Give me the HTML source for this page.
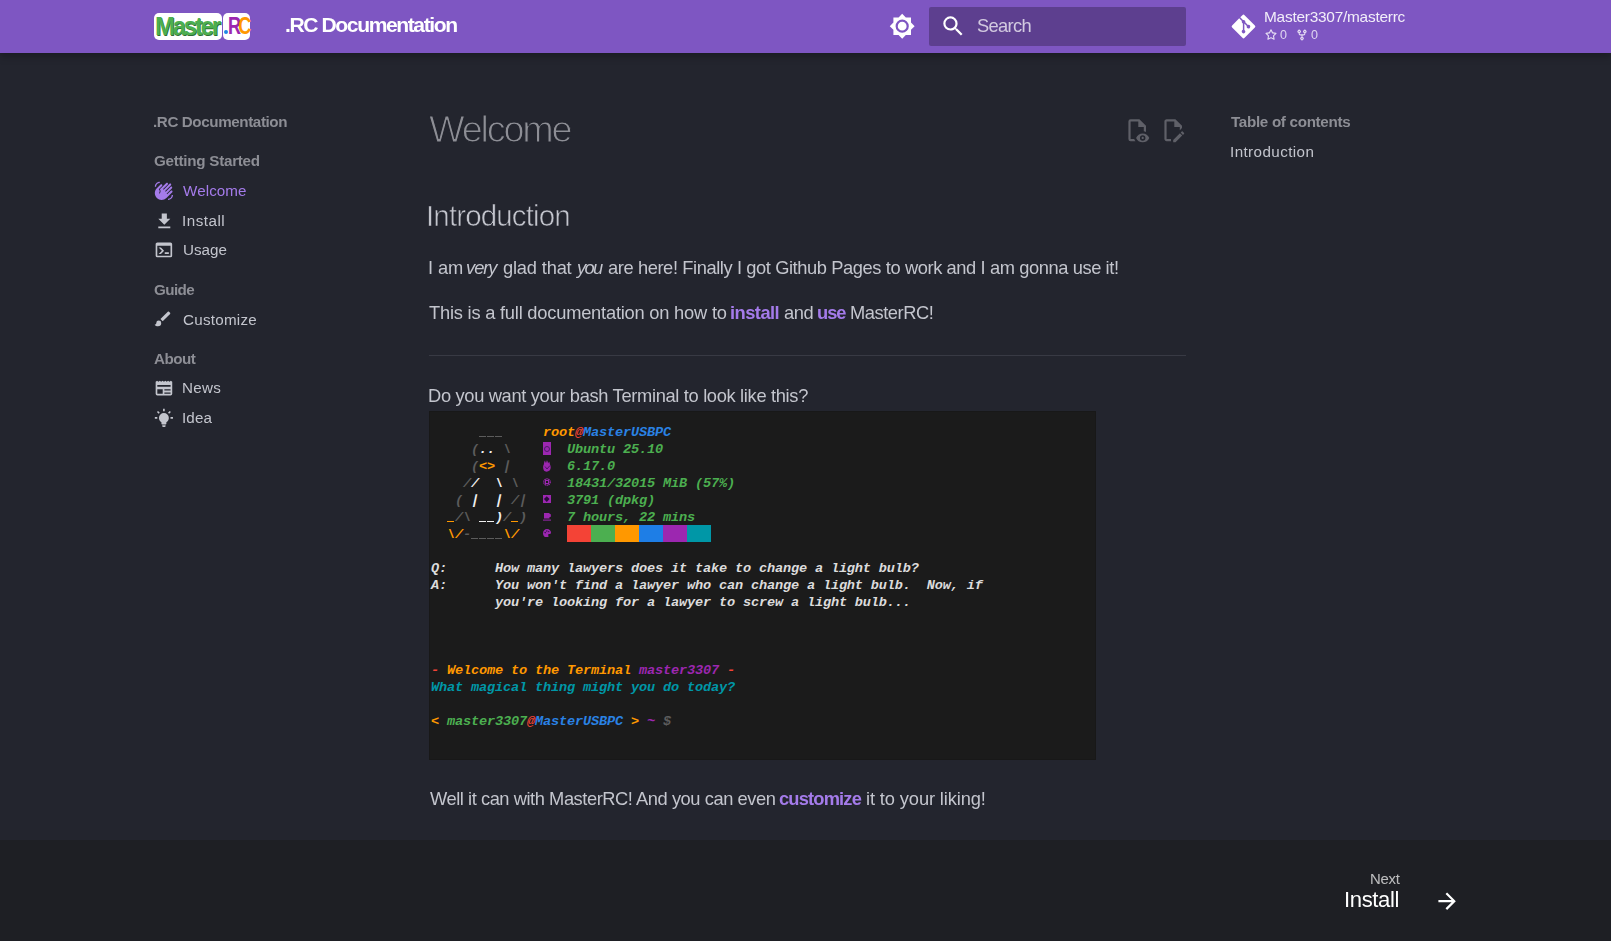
<!DOCTYPE html>
<html><head><meta charset="utf-8"><title>.RC Documentation</title>
<style>
html,body{margin:0;padding:0;width:1611px;height:941px;overflow:hidden;background:#23252e;font-family:"Liberation Sans",sans-serif;}
.t{position:absolute;white-space:nowrap;line-height:0;will-change:transform}
.t i{font-style:italic}
.lk{color:#a47bea;font-weight:700}
.ab{position:absolute}
svg.ic{position:absolute;display:block}
#term{position:absolute;left:429px;top:411px;width:667px;height:349px;background:#1b1b1b;box-shadow:inset 0 0 0 1px #181818;overflow:hidden}
#term .l{position:absolute;left:2px;white-space:pre;font-family:"Liberation Mono",monospace;font-size:13.6px;letter-spacing:-0.16px;line-height:0;font-style:italic;font-weight:700;color:#e8e8e8}
</style></head><body>
<style>#h1{-webkit-text-stroke:1.1px #23252e} #h2{-webkit-text-stroke:0.6px #23252e}</style>
<div class="ab" style="left:0;top:0;width:1611px;height:53px;background:#7e56c2;box-shadow:0 0 4px rgba(0,0,0,.1),0 4px 8px rgba(0,0,0,.2)"></div>
<!-- logo -->
<div class="ab" style="left:154px;top:13px;width:68px;height:27px;background:#fff;border-radius:5px"></div>
<div class="ab" style="left:223px;top:13px;width:27px;height:27px;background:#fff;border-radius:5px"></div>
<div class="ab" style="left:154.8px;top:25.6px;font:bold 26.6px 'Liberation Sans';line-height:0;color:#4caf50;letter-spacing:-2.45px;transform:scaleX(0.9);transform-origin:0 0;text-shadow:0.7px 0.9px 0 #2f6e33;white-space:nowrap">Master</div>
<div class="ab" style="left:224.1px;top:30px;width:4.2px;height:4.3px;border-radius:50%;background:#1e88e5"></div>
<div class="ab" style="left:227.8px;top:26.4px;font:bold 23.2px 'Liberation Sans';line-height:0;letter-spacing:-3.6px;transform:scaleX(0.78);transform-origin:0 0;white-space:nowrap"><span style="color:#9c27b0">R</span><span style="color:#ff9800">C</span></div>
<!-- palette toggle -->
<svg class="ic" style="left:889px;top:13px" width="26.4" height="26.4" viewBox="0 0 24 24"><path fill="#fff" d="M12,8A4,4 0 0,0 8,12A4,4 0 0,0 12,16A4,4 0 0,0 16,12A4,4 0 0,0 12,8M12,18A6,6 0 0,1 6,12A6,6 0 0,1 12,6A6,6 0 0,1 18,12A6,6 0 0,1 12,18M20,8.69V4H15.31L12,0.69L8.69,4H4V8.69L0.69,12L4,15.31V20H8.69L12,23.31L15.31,20H20V15.31L23.31,12L20,8.69Z"/></svg>
<!-- search -->
<div class="ab" style="left:929px;top:7px;width:257px;height:39px;background:rgba(0,0,0,0.26);border-radius:2px"></div>
<svg class="ic" style="left:940px;top:13px" width="26.4" height="26.4" viewBox="0 0 24 24"><path fill="#fff" d="M9.5,3A6.5,6.5 0 0,1 16,9.5C16,11.11 15.41,12.59 14.44,13.73L14.71,14H15.5L20.5,19L19,20.5L14,15.5V14.71L13.73,14.44C12.590,15.41 11.11,16 9.5,16A6.5,6.5 0 0,1 3,9.5A6.5,6.5 0 0,1 9.5,3M9.5,5C7,5 5,7 5,9.5C5,12 7,14 9.5,14C12,14 14,12 14,9.5C14,7 12,5 9.5,5Z"/></svg>
<!-- git icon -->
<svg class="ic" style="left:1229.8px;top:12.7px" width="27" height="27" viewBox="0 0 448 512"><path fill="#fff" d="M439.55 236.05L244 40.45a28.87 28.87 0 0 0-40.81 0l-40.66 40.63 51.52 51.52c27.06-9.14 52.68 16.77 43.39 43.68l49.66 49.660c34.23-11.8 61.18 31 35.47 56.69-26.49 26.49-70.21-2.87-56-37.34L240.22 199v121.85c25.3 12.54 22.26 41.85 9.08 55a34.34 34.34 0 0 1-48.55 0c-17.57-17.6-11.07-46.91 11.25-56v-123c-20.8-8.51-24.6-30.74-18.64-45L142.57 101 8.45 235.14a28.86 28.86 0 0 0 0 40.81l195.61 195.6a28.86 28.86 0 0 0 40.8 0l194.69-194.69a28.86 28.86 0 0 0 0-40.81z"/></svg>
<svg class="ic" style="left:1264.6px;top:29.2px" width="12" height="12" viewBox="0 0 16 16"><path fill="rgba(255,255,255,0.8)" d="M8 .25a.75.75 0 0 1 .673.418l1.882 3.815 4.21.612a.75.75 0 0 1 .416 1.279l-3.046 2.97.719 4.192a.751.751 0 0 1-1.088.791L8 12.347l-3.766 1.98a.75.75 0 0 1-1.088-.79l.72-4.194L.818 6.374a.75.75 0 0 1 .416-1.28l4.21-.611L7.327.668A.75.75 0 0 1 8 .25Zm0 2.445L6.615 5.5a.75.75 0 0 1-.564.41l-3.097.45 2.24 2.184a.75.75 0 0 1 .216.664l-.528 3.084 2.769-1.456a.75.75 0 0 1 .698 0l2.77 1.456-.53-3.084a.75.75 0 0 1 .216-.664l2.24-2.183-3.096-.45a.75.75 0 0 1-.564-.41L8 2.694Z"/></svg>
<svg class="ic" style="left:1295.8px;top:29.2px" width="12" height="12" viewBox="0 0 16 16"><path fill="rgba(255,255,255,0.8)" d="M5 5.372v.878c0 .414.336.75.75.75h4.5a.75.75 0 0 0 .75-.75v-.878a2.25 2.25 0 1 1 1.5 0v.878a2.25 2.25 0 0 1-2.25 2.25h-1.5v2.128a2.251 2.251 0 1 1-1.5 0V8.5h-1.5A2.250 2.25 0 0 1 3.5 6.25v-.878a2.25 2.25 0 1 1 1.5 0ZM5 3.25a.75.75 0 1 0-1.5 0 .75.75 0 0 0 1.5 0Zm6.75.75a.75.75 0 1 0 0-1.5.75.75 0 0 0 0 1.5Zm-3 8.75a.75.75 0 1 0-1.5 0 .75.75 0 0 0 1.5 0Z"/></svg>

<!-- sidebar icons -->
<svg class="ic" style="left:154px;top:181px" width="19.8" height="19.8" viewBox="0 0 24 24"><path fill="#a47bea" d="M23 17C23 20.31 20.31 23 17 23V21.5C19.5 21.5 21.5 19.5 21.5 17H23M1 7C1 3.69 3.69 1 7 1V2.5C4.5 2.5 2.5 4.5 2.5 7H1M8 4.32L3.41 8.92C.19 12.14 .19 17.37 3.41 20.59S11.86 23.81 15.08 20.59L22.15 13.5C22.64 13.03 22.64 12.24 22.15 11.750C21.66 11.26 20.87 11.26 20.38 11.75L15.96 16.17L15.25 15.46L21.79 8.92C22.28 8.43 22.28 7.64 21.79 7.15S20.5 6.66 20 7.15L14.19 12.96L13.5 12.25L20.56 5.19C21.05 4.7 21.05 3.91 20.56 3.42S19.27 2.93 18.78 3.42L11.71 10.5L11 9.79L16.66 4.13C17.15 3.64 17.15 2.85 16.66 2.36S15.37 1.87 14.88 2.36L7.11 10.13C8.33 11.69 8.23 13.94 6.8 15.37L6.09 14.66C7.26 13.5 7.26 11.58 6.09 10.42L5.74 10.06L9.8 6C10.29 5.5 10.29 4.72 9.8 4.23C9.3 3.74 8.5 3.74 8 4.32Z"/></svg>
<svg class="ic" style="left:153.6px;top:210.6px" width="20.6" height="20.6" viewBox="0 0 24 24"><path fill="#c3c5cd" d="M5,20H19V18H5M19,9H15V3H9V9H5L12,16L19,9Z"/></svg>
<svg class="ic" style="left:154.3px;top:240px" width="19.8" height="19.8" viewBox="0 0 24 24"><path fill="#c3c5cd" d="M20,19V7H4V19H20M20,3A2,2 0 0,1 22,5V19A2,2 0 0,1 20,21H4A2,2 0 0,1 2,19V5C2,3.89 2.9,3 4,3H20M13,17V15H18V17H13M9.58,13L5.57,9H8.4L11.7,12.3C12.09,12.69 12.09,13.33 11.7,13.72L8.42,17H5.59L9.58,13Z"/></svg>
<svg class="ic" style="left:153px;top:308.5px" width="19.8" height="19.8" viewBox="0 0 24 24"><path fill="#c3c5cd" d="M20.71,4.63L19.37,3.29C19,2.9 18.35,2.9 17.96,3.29L9,12.25L11.75,15L20.71,6.04C21.1,5.65 21.1,5 20.71,4.63M7,14A3,3 0 0,0 4,17C4,18.31 2.84,19 2,19C2.92,20.22 4.5,21 6,21A4,4 0 0,0 10,17A3,3 0 0,0 7,14Z"/></svg>
<svg class="ic" style="left:154.1px;top:377.8px" width="19.9" height="19.9" viewBox="0 0 24 24"><path fill="#c3c5cd" fill-rule="evenodd" d="M2 4.6L3.67 3.2L5.33 4.6L7 3.2L8.67 4.6L10.33 3.2L12 4.6L13.67 3.2L15.33 4.6L17 3.2L18.67 4.6L20.33 3.2L22 4.6V19A2 2 0 0 1 20 21H4A2 2 0 0 1 2 19ZM4 8.5H20V10.7H4ZM4 13.5H10.5V19H4ZM12.5 13.5H20V15H12.5ZM12.5 17.5H20V19H12.5Z"/></svg>
<svg class="ic" style="left:154px;top:408.2px" width="19.8" height="19.8" viewBox="0 0 24 24"><path fill="#c3c5cd" d="M12,6A6,6 0 0,1 18,12C18,14.22 16.79,16.16 15,17.2V19A1,1 0 0,1 14,20H10A1,1 0 0,1 9,19V17.2C7.21,16.16 6,14.22 6,12A6,6 0 0,1 12,6M14,21V22A1,1 0 0,1 13,23H11A1,1 0 0,1 10,22V21H14M20,11H23V13H20V11M1,11H4V13H1V11M13,1V4H11V1H13M4.92,3.5L7.05,5.64L5.63,7.05L3.5,4.93L4.92,3.5M16.95,5.63L19.07,3.5L20.5,4.93L18.36,7.05L16.95,5.63Z"/></svg>

<!-- content actions -->
<svg class="ic" style="left:1123.6px;top:117.4px" width="26.4" height="26.4" viewBox="0 0 24 24"><path fill="#5f6068" d="M17,18C17.56,18 18,18.44 18,19C18,19.56 17.56,20 17,20C16.44,20 16,19.56 16,19C16,18.44 16.44,18 17,18M17,15C14.27,15 11.94,16.66 11,19C11.94,21.34 14.27,23 17,23C19.73,23 22.06,21.34 23,19C22.06,16.66 19.73,15 17,15M17,21.5A2.5,2.5 0 0,1 14.5,19A2.5,2.5 0 0,1 17,16.5A2.5,2.5 0 0,1 19.5,19A2.5,2.5 0 0,1 17,21.5M9.27,20H6V4H13V9H18V13.07C18.7,13.15 19.36,13.32 20,13.56V8L14,2H6A2,2 0 0,0 4,4V20A2,2 0 0,0 6,22H10.5C10,21.41 9.59,20.73 9.27,20Z"/></svg>
<svg class="ic" style="left:1160.4px;top:117.2px" width="26.4" height="26.4" viewBox="0 0 24 24"><path fill="#5f6068" d="M10 20H6V4H13V9H18V12.1L20 10.1V8L14 2H6C4.9 2 4 2.9 4 4V20C4 21.1 4.9 22 6 22H10V20M20.2 13C20.3 13 20.5 13.1 20.6 13.2L21.9 14.5C22.1 14.7 22.1 15.1 21.9 15.3L20.9 16.3L18.8 14.2L19.8 13.2C19.9 13.1 20 13 20.2 13M20.2 16.9L14.1 23H12V20.9L18.1 14.8L20.2 16.9Z"/></svg>

<!-- hr -->
<div class="ab" style="left:429px;top:355px;width:757px;height:1px;background:#383a44"></div>

<div id="term">
<div class="l" style="top:22.38px">      <span style="color:#5c5c5c"><span style="position:relative;color:transparent">_<b style="position:absolute;left:0.4px;width:6.3px;top:10.2px;height:1.7px;background:#5c5c5c"></b></span><span style="position:relative;color:transparent">_<b style="position:absolute;left:0.4px;width:6.3px;top:10.2px;height:1.7px;background:#5c5c5c"></b></span><span style="position:relative;color:transparent">_<b style="position:absolute;left:0.4px;width:6.3px;top:10.2px;height:1.7px;background:#5c5c5c"></b></span></span>     <span style="color:#ff9800">root</span><span style="color:#f44336">@</span><span style="color:#2a82e4">MasterUSBPC</span></div>
<div class="l" style="top:39.38px">     <span style="color:#5c5c5c">(</span><span style="color:#f0f0f0">..</span> <span style="color:#5c5c5c">\</span>       <span style="color:#4caf50">Ubuntu 25.10</span></div>
<div class="l" style="top:56.38px">     <span style="color:#5c5c5c">(</span><span style="color:#ff9800">&lt;&gt;</span> <span style="color:#5c5c5c"><span style="display:inline-block;transform:skewX(-12deg)">|</span></span>       <span style="color:#4caf50">6.17.0</span></div>
<div class="l" style="top:73.38px">    <span style="color:#5c5c5c">/</span><span style="color:#f0f0f0">/</span>  <span style="color:#f0f0f0">\</span> <span style="color:#5c5c5c">\</span>      <span style="color:#4caf50">18431/32015 MiB (57%)</span></div>
<div class="l" style="top:90.38px">   <span style="color:#5c5c5c">(</span> <span style="color:#f0f0f0"><span style="display:inline-block;transform:skewX(-12deg)">|</span></span>  <span style="color:#f0f0f0"><span style="display:inline-block;transform:skewX(-12deg)">|</span></span> <span style="color:#5c5c5c">/</span><span style="color:#5c5c5c"><span style="display:inline-block;transform:skewX(-12deg)">|</span></span>     <span style="color:#4caf50">3791 (dpkg)</span></div>
<div class="l" style="top:107.38px">  <span style="color:#ff9800"><span style="position:relative;color:transparent">_<b style="position:absolute;left:0.4px;width:6.3px;top:10.2px;height:1.7px;background:#ff9800"></b></span></span><span style="color:#5c5c5c">/\</span> <span style="color:#f0f0f0"><span style="position:relative;color:transparent">_<b style="position:absolute;left:0.4px;width:6.3px;top:10.2px;height:1.7px;background:#f0f0f0"></b></span><span style="position:relative;color:transparent">_<b style="position:absolute;left:0.4px;width:6.3px;top:10.2px;height:1.7px;background:#f0f0f0"></b></span>)</span><span style="color:#5c5c5c">/</span><span style="color:#ff9800"><span style="position:relative;color:transparent">_<b style="position:absolute;left:0.4px;width:6.3px;top:10.2px;height:1.7px;background:#ff9800"></b></span></span><span style="color:#5c5c5c">)</span>     <span style="color:#4caf50">7 hours, 22 mins</span></div>
<div class="l" style="top:124.38px">  <span style="color:#ff9800">\/</span><span style="color:#5c5c5c">-<span style="position:relative;color:transparent">_<b style="position:absolute;left:0.4px;width:6.3px;top:10.2px;height:1.7px;background:#5c5c5c"></b></span><span style="position:relative;color:transparent">_<b style="position:absolute;left:0.4px;width:6.3px;top:10.2px;height:1.7px;background:#5c5c5c"></b></span><span style="position:relative;color:transparent">_<b style="position:absolute;left:0.4px;width:6.3px;top:10.2px;height:1.7px;background:#5c5c5c"></b></span><span style="position:relative;color:transparent">_<b style="position:absolute;left:0.4px;width:6.3px;top:10.2px;height:1.7px;background:#5c5c5c"></b></span></span><span style="color:#ff9800">\/</span></div>
<div class="l" style="top:158.38px"><span style="color:#dcdcdc">Q:      How many lawyers does it take to change a light bulb?</span></div>
<div class="l" style="top:175.38px"><span style="color:#dcdcdc">A:      You won't find a lawyer who can change a light bulb.  Now, if</span></div>
<div class="l" style="top:192.38px"><span style="color:#dcdcdc">        you're looking for a lawyer to screw a light bulb...</span></div>
<div class="l" style="top:260.38px"><span style="color:#f44336">- </span><span style="color:#ff9800">Welcome to the Terminal </span><span style="color:#9c27b0">master3307</span><span style="color:#f44336"> -</span></div>
<div class="l" style="top:277.38px"><span style="color:#0097a7">What magical thing might you do today?</span></div>
<div class="l" style="top:311.38px"><span style="color:#ff9800">&lt; </span><span style="color:#4caf50">master3307</span><span style="color:#f44336">@</span><span style="color:#2a82e4">MasterUSBPC</span><span style="color:#ff9800"> &gt; </span><span style="color:#9c27b0">~ </span><span style="color:#5c5c5c">$</span></div>
<div style="position:absolute;left:138px;top:114px;width:24px;height:17px;background:#f44336"></div>
<div style="position:absolute;left:162px;top:114px;width:24px;height:17px;background:#4caf50"></div>
<div style="position:absolute;left:186px;top:114px;width:24px;height:17px;background:#ff9800"></div>
<div style="position:absolute;left:210px;top:114px;width:24px;height:17px;background:#1e7ee6"></div>
<div style="position:absolute;left:234px;top:114px;width:24px;height:17px;background:#9c27b0"></div>
<div style="position:absolute;left:258px;top:114px;width:24px;height:17px;background:#0097a7"></div>
<div style="position:absolute;left:114px;top:31px;width:8px;height:13px;background:#9c27b0"><div style="position:absolute;left:1px;top:3.5px;width:4px;height:4px;border:1px solid #4a1a66;border-radius:50%"></div></div>
<svg style="position:absolute;left:114px;top:48.5px" width="8" height="12" viewBox="0 0 8 12"><path fill="#9c27b0" d="M1.5 0.5L2.5 3L3 0L4 3L4.8 0.3L5.3 3.3L6.3 1.5L7 4.5C8 6 8 9 6.5 10.5C5 12 2 12 1 10.5C0 9 -0.3 6 0.8 4.5Z"/><path d="M2 6.5L4 9L7 5.5" stroke="#3a1050" stroke-width="0.8" fill="none"/></svg>
<svg style="position:absolute;left:114px;top:67px" width="8" height="8" viewBox="0 0 8 8"><circle cx="4" cy="4" r="3.2" fill="none" stroke="#9c27b0" stroke-width="1.3" stroke-dasharray="1.4 0.6"/><rect x="2.5" y="2.5" width="3" height="3" fill="none" stroke="#9c27b0" stroke-width="1"/></svg>
<div style="position:absolute;left:114px;top:84.30000000000001px;width:8px;height:7.8px;background:#9c27b0"><div style="position:absolute;left:2px;top:2.2px;width:3.5px;height:3.5px;background:#2a0c3a;transform:rotate(45deg)"></div></div>
<svg style="position:absolute;left:114px;top:101.5px" width="8" height="8" viewBox="0 0 8 8"><path fill="#9c27b0" d="M1 0H6.5V1H7.5C8 1 8 4 7.5 4H6.5V5.5H1Z"/><rect x="0" y="6.6" width="8" height="1" fill="#9c27b0"/></svg>
<svg style="position:absolute;left:114px;top:117.5px" width="8" height="8.5" viewBox="0 0 8 8.5"><path fill="#9c27b0" d="M4 0C6.5 0 8 1.8 8 3.8C8 5 7 5 6.2 5C5.2 5 5 6 5.4 6.8C5.8 7.6 5 8.5 4 8.5C1.7 8.5 0 6.6 0 4.2C0 1.8 1.8 0 4 0Z"/><circle cx="2.2" cy="3.6" r="0.8" fill="#3a1050"/><circle cx="3.8" cy="2" r="0.8" fill="#3a1050"/><circle cx="5.7" cy="2.6" r="0.7" fill="#3a1050"/></svg>
</div>

<!-- footer -->
<div class="ab" style="left:0;top:840px;width:1611px;height:101px;background:#1e1f24"></div>
<svg class="ic" style="left:1434px;top:888px" width="26.4" height="26.4" viewBox="0 0 24 24"><path fill="#fff" d="M4,11V13H16L10.5,18.5L11.92,19.920L19.84,12L11.92,4.08L10.5,5.5L16,11H4Z"/></svg>

<div class="t" id="htitle" style="left:284.94px;top:24.50px;font-size:21.08px;color:#ffffff;font-weight:700;letter-spacing:-1.403px;"><span>.RC Documentation</span></div>
<div class="t" id="search" style="left:976.51px;top:26.15px;font-size:18.31px;color:rgba(255,255,255,0.72);font-weight:400;letter-spacing:-0.654px;"><span>Search</span></div>
<div class="t" id="repo" style="left:1263.54px;top:16.76px;font-size:15.41px;color:rgba(255,255,255,0.9);font-weight:400;letter-spacing:-0.240px;"><span>Master3307/masterrc</span></div>
<div class="t" id="stars" style="left:1279.80px;top:35.47px;font-size:12.50px;color:rgba(255,255,255,0.75);font-weight:400;"><span>0</span></div>
<div class="t" id="forks" style="left:1310.80px;top:35.47px;font-size:12.50px;color:rgba(255,255,255,0.75);font-weight:400;"><span>0</span></div>
<div class="t" id="navt" style="left:153.38px;top:122.33px;font-size:15.20px;color:#8d8e95;font-weight:700;letter-spacing:-0.399px;"><span>.RC Documentation</span></div>
<div class="t" id="gs" style="left:154.15px;top:160.63px;font-size:15.20px;color:#8d8e95;font-weight:700;letter-spacing:-0.260px;"><span>Getting Started</span></div>
<div class="t" id="nwel" style="left:183.48px;top:190.73px;font-size:15.20px;color:#a47bea;font-weight:400;letter-spacing:0.086px;"><span>Welcome</span></div>
<div class="t" id="ninst" style="left:181.86px;top:221.23px;font-size:15.20px;color:#c3c5cd;font-weight:400;letter-spacing:0.511px;"><span>Install</span></div>
<div class="t" id="nuse" style="left:182.67px;top:250.33px;font-size:15.20px;color:#c3c5cd;font-weight:400;letter-spacing:0.030px;"><span>Usage</span></div>
<div class="t" id="guide" style="left:154.15px;top:290.13px;font-size:15.20px;color:#8d8e95;font-weight:700;letter-spacing:-0.601px;"><span>Guide</span></div>
<div class="t" id="ncust" style="left:182.74px;top:319.53px;font-size:15.20px;color:#c3c5cd;font-weight:400;letter-spacing:0.243px;"><span>Customize</span></div>
<div class="t" id="about" style="left:153.97px;top:359.03px;font-size:15.20px;color:#8d8e95;font-weight:700;letter-spacing:-0.487px;"><span>About</span></div>
<div class="t" id="nnews" style="left:182.42px;top:388.43px;font-size:15.20px;color:#c3c5cd;font-weight:400;letter-spacing:0.318px;"><span>News</span></div>
<div class="t" id="nidea" style="left:181.86px;top:417.93px;font-size:15.20px;color:#c3c5cd;font-weight:400;letter-spacing:0.145px;"><span>Idea</span></div>
<div class="t" id="h1" style="left:428.62px;top:128.91px;font-size:37.79px;color:#8d8e95;font-weight:400;letter-spacing:-2.197px;"><span>Welcome</span></div>
<div class="t" id="h2" style="left:425.89px;top:215.98px;font-size:29.51px;color:#c3c5cd;font-weight:400;letter-spacing:-0.854px;"><span>Introduction</span></div>
<div class="t" id="p1a" style="left:427.98px;top:268.15px;font-size:18.31px;color:#c3c5cd;font-weight:400;letter-spacing:-0.115px;"><span>I am</span></div>
<div class="t" id="p1b" style="left:466.49px;top:268.15px;font-size:18.31px;color:#c3c5cd;font-weight:400;letter-spacing:-1.021px;"><span><i>very</i></span></div>
<div class="t" id="p1c" style="left:502.96px;top:268.15px;font-size:18.31px;color:#c3c5cd;font-weight:400;letter-spacing:-0.186px;"><span>glad that</span></div>
<div class="t" id="p1d" style="left:576.50px;top:268.15px;font-size:18.31px;color:#c3c5cd;font-weight:400;letter-spacing:-1.669px;"><span><i>you</i></span></div>
<div class="t" id="p1e" style="left:607.61px;top:268.15px;font-size:18.31px;color:#c3c5cd;font-weight:400;letter-spacing:-0.409px;"><span>are here! Finally I got Github Pages to work and I am gonna use it!</span></div>
<div class="t" id="p2a" style="left:429.32px;top:312.55px;font-size:18.31px;color:#c3c5cd;font-weight:400;letter-spacing:-0.222px;"><span>This is a full documentation on how to</span></div>
<div class="t" id="p2b" style="left:730.31px;top:312.55px;font-size:18.31px;color:#c3c5cd;font-weight:400;letter-spacing:-0.535px;"><span><b class="lk">install</b></span></div>
<div class="t" id="p2c" style="left:783.87px;top:312.55px;font-size:18.31px;color:#c3c5cd;font-weight:400;letter-spacing:-0.467px;"><span>and</span></div>
<div class="t" id="p2d" style="left:817.29px;top:312.55px;font-size:18.31px;color:#c3c5cd;font-weight:400;letter-spacing:-0.993px;"><span><b class="lk">use</b></span></div>
<div class="t" id="p2e" style="left:849.51px;top:312.55px;font-size:18.31px;color:#c3c5cd;font-weight:400;letter-spacing:-0.464px;"><span>MasterRC!</span></div>
<div class="t" id="p3" style="left:427.99px;top:395.55px;font-size:18.31px;color:#c3c5cd;font-weight:400;letter-spacing:-0.333px;"><span>Do you want your bash Terminal to look like this?</span></div>
<div class="t" id="p4a" style="left:429.68px;top:798.75px;font-size:18.31px;color:#c3c5cd;font-weight:400;letter-spacing:-0.451px;"><span>Well it can with MasterRC! And you can even</span></div>
<div class="t" id="p4b" style="left:778.82px;top:798.75px;font-size:18.31px;color:#c3c5cd;font-weight:400;letter-spacing:-0.829px;"><span><b class="lk">customize</b></span></div>
<div class="t" id="p4c" style="left:865.70px;top:798.75px;font-size:18.31px;color:#c3c5cd;font-weight:400;letter-spacing:-0.127px;"><span>it to your liking!</span></div>
<div class="t" id="toct" style="left:1230.63px;top:122.43px;font-size:15.20px;color:#8d8e95;font-weight:700;letter-spacing:-0.309px;"><span>Table of contents</span></div>
<div class="t" id="toci" style="left:1229.52px;top:151.73px;font-size:15.20px;color:#c3c5cd;font-weight:400;letter-spacing:0.409px;"><span>Introduction</span></div>
<div class="t" id="fnext" style="left:1369.70px;top:879.44px;font-size:14.90px;color:rgba(255,255,255,0.7);font-weight:400;letter-spacing:-0.269px;"><span>Next</span></div>
<div class="t" id="finst" style="left:1344.42px;top:899.54px;font-size:22.09px;color:#ffffff;font-weight:400;letter-spacing:-0.385px;"><span>Install</span></div>
</body></html>
